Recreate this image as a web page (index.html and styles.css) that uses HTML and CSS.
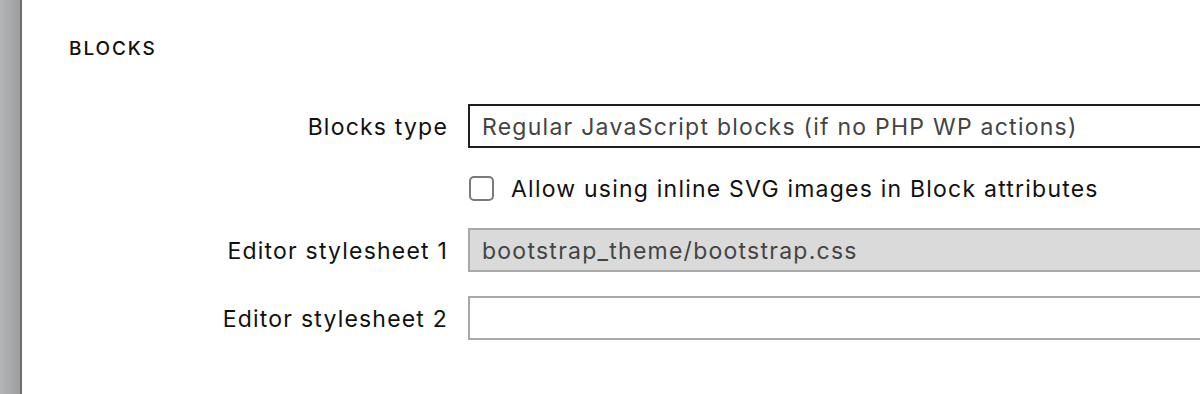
FILE: index.html
```html
<!DOCTYPE html>
<html>
<head>
  <title>Blocks settings</title>
  <link rel="stylesheet" href="styles.css">
</head>
<body>
  <div class="page">
    <div class="sidebar"></div>

    <div class="content">
      <h3 class="section-title">BLOCKS</h3>

      <form class="settings-form">
        <label class="field-label" for="blocksType">Blocks type</label>
        <div class="field">
          <div class="select-box" id="blocksType">Regular JavaScript blocks (if no PHP WP actions)</div>
        </div>

        <div class="field-label"></div>
        <div class="field check-field">
          <span class="checkbox"></span>
          <span class="check-text">Allow using inline SVG images in Block attributes</span>
        </div>

        <label class="field-label" for="editorCss1">Editor stylesheet 1</label>
        <div class="field">
          <div class="text-box disabled" id="editorCss1">bootstrap_theme/bootstrap.css</div>
        </div>

        <label class="field-label" for="editorCss2">Editor stylesheet 2</label>
        <div class="field">
          <div class="text-box" id="editorCss2"></div>
        </div>
      </form>
    </div>
  </div>
</body>
</html>
```

FILE: styles.css
```css
body {
  margin: 0;
  padding: 0;
  background-color: white;
  font-family: Inter, "Liberation Sans", Arial, sans-serif;
  color: #111;
  overflow: hidden;
}

.page {
  display: flex;
  height: 394px;
}

.sidebar {
  width: 20px;
  flex-shrink: 0;
  background: linear-gradient(to right, #b4b5b7, #9c9d9f);
  border-right: 2px solid #6e6e70;
}

.content {
  flex: 1;
  padding-left: 47px;
}

.section-title {
  margin: 38px 0 0 0;
  font-size: 19px;
  font-weight: 500;
  line-height: 22px;
  letter-spacing: 1.9px;
}

.settings-form {
  display: grid;
  grid-template-columns: 378px 1fr;
  column-gap: 21px;
  row-gap: 24px;
  margin-top: 44px;
}

.field-label {
  display: flex;
  align-items: center;
  justify-content: flex-end;
  padding-top: 2px;
  font-size: 23px;
  letter-spacing: 1.2px;
  margin-right: -1px;
}

.field {
  display: flex;
  align-items: center;
  margin-right: -40px;
}

.select-box, .text-box {
  box-sizing: border-box;
  width: 100%;
  height: 44px;
  padding: 2px 12px 0 12px;
  display: flex;
  align-items: center;
  font-size: 23px;
  letter-spacing: 1.25px;
  color: #444;
}

.select-box {
  border: 2px solid #1e1e1e;
}

.text-box {
  border: 2px solid #a9a9a9;
  background-color: white;
}

.text-box.disabled {
  background-color: #dadada;
}

.check-field {
  height: 32px;
  gap: 17px;
}

.checkbox {
  box-sizing: border-box;
  width: 25px;
  height: 25px;
  margin-left: 1px;
  border: 2px solid #7a7a7a;
  border-radius: 5px;
}

.check-text {
  padding-top: 2px;
  font-size: 23px;
  letter-spacing: 1.22px;
}
```
